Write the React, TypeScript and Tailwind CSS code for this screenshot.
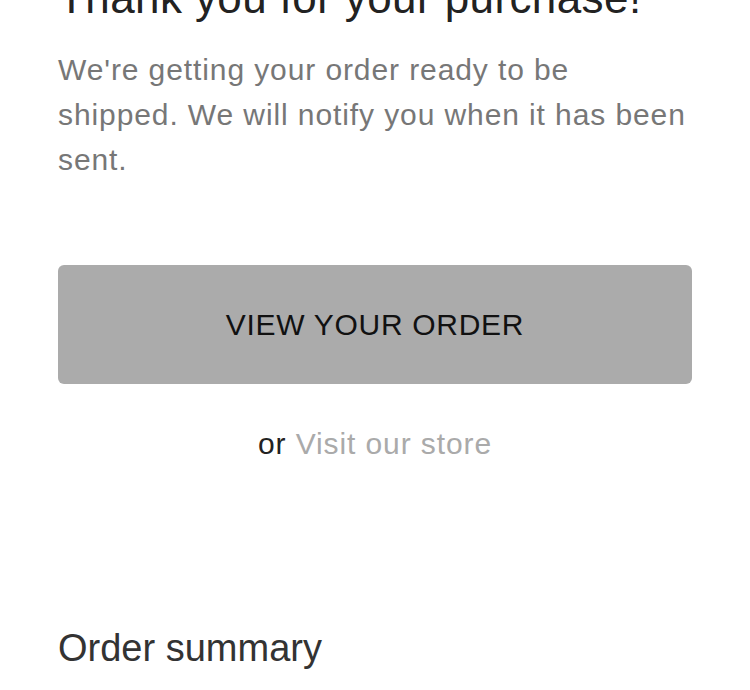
// Order confirmation screen: thank-you message, order button, summary heading.
export default function App() {
  return (
    <div className="h-[690px] w-[750px] overflow-hidden bg-white font-['Liberation_Sans',Arial,sans-serif]">
      <div className="px-[58px]">
        <h1 className="mt-[-29px] text-[44px] leading-[53px] tracking-[0.4px] text-[#222]">
          Thank you for your purchase!
        </h1>

        <p className="mt-[23px] text-[30px] leading-[45px] tracking-[0.9px] text-[#777]">
          We're getting your order ready to be shipped. We will notify you
          when it has been sent.
        </p>

        <button
          type="button"
          className="mt-[83px] flex h-[119px] w-full items-center justify-center rounded-md bg-[#ababab] text-[30px] tracking-[0.7px] text-[#111]"
        >
          VIEW YOUR ORDER
        </button>

        <p className="mt-[41px] text-center text-[30px] leading-[37px] tracking-[0.9px] text-[#222]">
          or <a className="text-[#aaa]">Visit our store</a>
        </p>

        <h2 className="mt-[163px] text-[38px] leading-[46px] text-[#333]">
          Order summary
        </h2>
      </div>
    </div>
  );
}
